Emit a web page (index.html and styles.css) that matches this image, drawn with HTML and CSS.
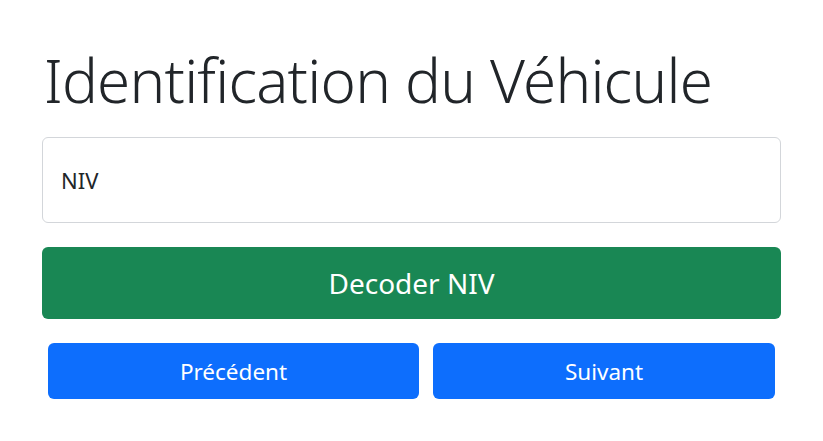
FILE: index.html
```html
<!DOCTYPE html>
<html lang="fr">
<head>
<meta charset="utf-8">
<title>Identification du Véhicule</title>
<link rel="stylesheet" href="styles.css">
</head>
<body>
<main class="page">
  <h1 class="title">Identification du Véhicule</h1>
  <input class="vin-input" type="text" placeholder="NIV" value="NIV">
  <button class="btn btn-decode" type="button">Decoder NIV</button>
  <div class="nav-row">
    <button class="btn btn-nav" type="button">Précédent</button>
    <button class="btn btn-nav" type="button">Suivant</button>
  </div>
</main>
</body>
</html>
```

FILE: styles.css
```css
* { box-sizing: border-box; }
html, body { margin: 0; padding: 0; background: #fff; }
body {
  font-family: "Noto Sans", "Open Sans", sans-serif;
  color: #212529;
}
.page {
  padding: 44px 42px 0 42px;
  display: flex;
  flex-direction: column;
}
.title {
  margin: 0 0 21px 0;
  font-size: 60px;
  font-weight: 300;
  line-height: 72px;
  letter-spacing: -0.75px;
  color: #212529;
  padding-left: 2px;
}
.vin-input {
  height: 86px;
  width: 100%;
  border: 1px solid #d3d6da;
  border-radius: 6px;
  padding: 0 18px;
  font-family: inherit;
  font-size: 22px;
  color: #212529;
  outline: none;
}
.btn {
  border: 0;
  border-radius: 6px;
  color: #fff;
  font-family: inherit;
  cursor: pointer;
}
.btn-decode {
  margin-top: 24px;
  height: 72px;
  width: 100%;
  background: #198754;
  font-size: 28px;
}
.nav-row {
  margin-top: 24px;
  padding: 0 6px;
  display: flex;
  gap: 14px;
}
.btn-nav {
  flex: 1 1 auto;
  height: 56px;
  background: #0d6efd;
  font-size: 22.5px;
}
```
